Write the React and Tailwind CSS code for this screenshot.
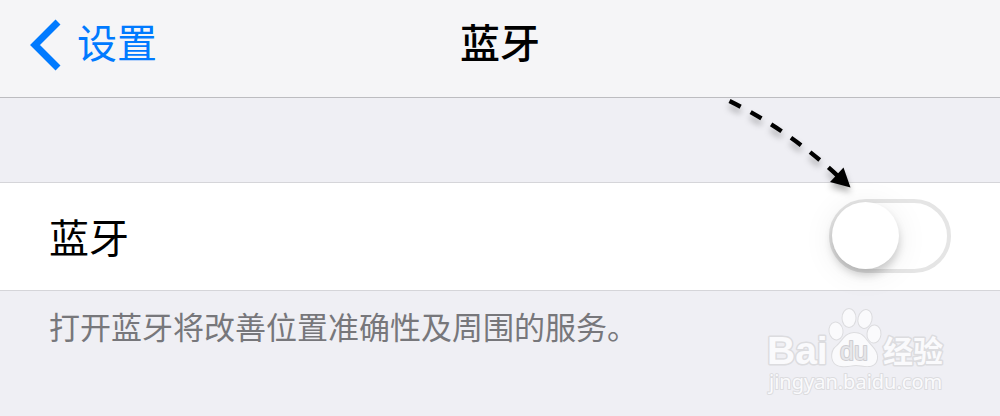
import React from "react";

function NavBar() {
  return (
    <header className="grid h-[98px] grid-cols-3 items-center border-b border-[#bcbcc0] bg-[#f5f5f7] px-[30px] pb-4">
      <a href="#settings" className="flex items-start gap-4 justify-self-start text-[#007aff]">
        <svg viewBox="0 0 31 52" className="mt-2 h-[52px] w-[31px]" fill="none" aria-hidden="true">
          <path d="M28 3 L5 26 L28 49" stroke="currentColor" strokeWidth="7" />
        </svg>
        <span className="text-[40px] leading-[60px]">设置</span>
      </a>
      <h1 className="justify-self-center text-[40px] leading-[60px] font-medium text-black">蓝牙</h1>
    </header>
  );
}

function PointerArrow() {
  return (
    <svg
      viewBox="0 0 140 110"
      className="pointer-events-none absolute right-[90px] bottom-[73px] h-[110px] w-[140px] drop-shadow-[0_5px_3px_rgba(0,0,0,0.3)]"
      fill="none"
      aria-hidden="true"
    >
      <path d="M8.500 11 Q69 41 119 88" stroke="#000" strokeWidth="4.4" strokeDasharray="12.5 11.4" />
      <path d="M129.500 97.500 L109 92 L122.500 77.500 Z" fill="#000" />
    </svg>
  );
}

function BluetoothRow() {
  return (
    <div className="flex h-[109px] items-center justify-between border-y border-[#d5d5d9] bg-white px-[49px] pb-0.5">
      <label htmlFor="bluetooth" className="text-[40px] leading-[60px] text-black">
        蓝牙
      </label>
      <div className="relative h-[74px] w-[122px]">
        <input
          id="bluetooth"
          type="checkbox"
          role="switch"
          className="flex h-[74px] w-[122px] appearance-none items-center rounded-full border-4 border-[#e5e5e5] bg-white before:-ml-px before:size-[67px] before:rounded-full before:bg-white before:shadow-[0_6px_8px_rgba(0,0,0,0.18),0_4px_32px_rgba(0,0,0,0.08)] before:content-[''] checked:justify-end checked:bg-[#4cd964]"
        />
        <PointerArrow />
      </div>
    </div>
  );
}

function Watermark() {
  return (
    <svg
      viewBox="0 0 190 95"
      className="absolute right-[46px] bottom-[15px] h-[95px] w-[190px] font-['Liberation_Sans','Noto_Sans_CJK_SC',sans-serif]"
      fill="#fafafc"
      stroke="#dcdcdf"
      strokeWidth="2"
      strokeLinejoin="round"
      paintOrder="stroke"
      role="img"
      aria-label="Baidu 经验"
    >
      <text x="3" y="58" fontSize="39" fontWeight="700" strokeWidth="3">Bai</text>
      <ellipse cx="72" cy="25" rx="6.500" ry="8.500" transform="rotate(-10 72 25)" />
      <ellipse cx="85" cy="12" rx="6.500" ry="9" />
      <ellipse cx="101" cy="13" rx="6.500" ry="9" transform="rotate(14 101 13)" />
      <ellipse cx="110" cy="28" rx="6.500" ry="8.500" transform="rotate(6 110 28)" />
      <path d="M90 27 C81 27 78 36 73 40 C66 45 66 59 77 60 C84 61 87 59 92 59 C98 59 108 63 112 56 C116 47 108 41 104 36 C100 31 98 27 90 27 Z" />
      <text x="76" y="54" fontSize="25" fill="#e6e6e9" stroke="#cdcdd1" strokeWidth="2">du</text>
      <text x="119" y="56" fontSize="30" fontWeight="700" strokeWidth="3">经验</text>
      <text x="5" y="83" fontSize="20" strokeWidth="2" fontFamily="Noto Sans, sans-serif">jingyan.baidu.com</text>
    </svg>
  );
}

export default function App() {
  return (
    <div className="relative min-h-screen bg-[#efeff4] font-['Noto_Sans_CJK_SC',sans-serif]">
      <NavBar />
      <main className="pt-[84px]">
        <BluetoothRow />
        <p className="px-[49px] pt-3 text-[31px] leading-[46px] text-[#77777b]">
          打开蓝牙将改善位置准确性及周围的服务。
        </p>
      </main>
      <Watermark />
    </div>
  );
}
